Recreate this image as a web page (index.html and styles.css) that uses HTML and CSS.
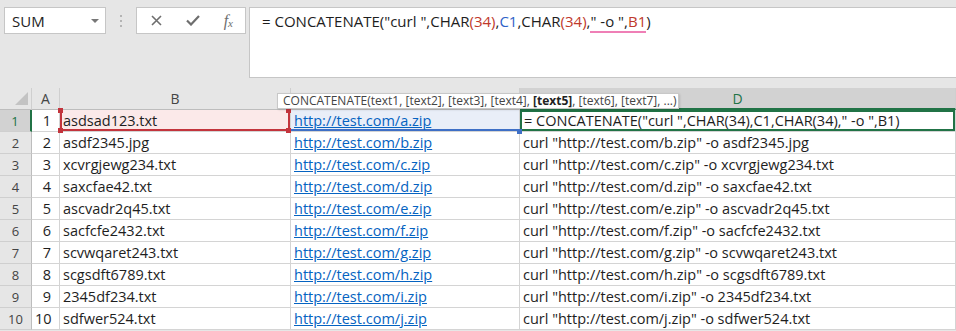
FILE: index.html
```html
<!DOCTYPE html>
<html lang="en">
<head>
  <meta charset="UTF-8" />
  <title>Book1 - Excel</title>
  <link rel="stylesheet" href="styles.css">
</head>
<body>
  <!-- Formula bar -->
  <div class="formula-bar">
    <div class="name-box">
      <span>SUM</span>
      <span class="caret"></span>
    </div>
    <div class="grip"><i></i><i></i><i></i></div>
    <div class="fx-box">
      <svg width="11" height="11" viewBox="0 0 11 11"><path d="M1 1L10 10M10 1L1 10" stroke="#6e6e6e" stroke-width="1.6" fill="none"/></svg>
      <svg width="14" height="11" viewBox="0 0 14 11"><path d="M1 5.5L5 9.5L13 1" stroke="#6e6e6e" stroke-width="2.2" fill="none"/></svg>
      <span class="fx"><i>f</i><sub>x</sub></span>
    </div>
    <div class="formula-input"><span>= CONCATENATE("curl ",CHAR<span class="p">(34)</span>,<span class="ref-c">C1</span>,CHAR<span class="p">(34)</span>,<span class="under">" -o ",<span class="ref-b">B1</span></span>)</span></div>
  </div>

  <!-- Grid -->
  <div class="sheet">
    <div class="tip">CONCATENATE(text1, [text2], [text3], [text4], <b>[text5]</b>, [text6], [text7], ...)</div>

    <div class="hd corner"><span class="tri"></span></div>
    <div class="hd">A</div>
    <div class="hd">B</div>
    <div class="hd"></div>
    <div class="hd active-col">D</div>

    <div class="rh active-row">1</div>
    <div class="c num">1</div>
    <div class="c sel-b">asdsad123.txt</div>
    <div class="c sel-c"><a>http://test.com/a.zip</a></div>
    <div class="c sel-d">= CONCATENATE("curl ",CHAR(34),C1,CHAR(34)," -o ",B1)</div>

    <div class="rh">2</div>
    <div class="c num">2</div>
    <div class="c">asdf2345.jpg</div>
    <div class="c"><a>http://test.com/b.zip</a></div>
    <div class="c">curl "http://test.com/b.zip" -o asdf2345.jpg</div>

    <div class="rh">3</div>
    <div class="c num">3</div>
    <div class="c">xcvrgjewg234.txt</div>
    <div class="c"><a>http://test.com/c.zip</a></div>
    <div class="c">curl "http://test.com/c.zip" -o xcvrgjewg234.txt</div>

    <div class="rh">4</div>
    <div class="c num">4</div>
    <div class="c">saxcfae42.txt</div>
    <div class="c"><a>http://test.com/d.zip</a></div>
    <div class="c">curl "http://test.com/d.zip" -o saxcfae42.txt</div>

    <div class="rh">5</div>
    <div class="c num">5</div>
    <div class="c">ascvadr2q45.txt</div>
    <div class="c"><a>http://test.com/e.zip</a></div>
    <div class="c">curl "http://test.com/e.zip" -o ascvadr2q45.txt</div>

    <div class="rh">6</div>
    <div class="c num">6</div>
    <div class="c">sacfcfe2432.txt</div>
    <div class="c"><a>http://test.com/f.zip</a></div>
    <div class="c">curl "http://test.com/f.zip" -o sacfcfe2432.txt</div>

    <div class="rh">7</div>
    <div class="c num">7</div>
    <div class="c">scvwqaret243.txt</div>
    <div class="c"><a>http://test.com/g.zip</a></div>
    <div class="c">curl "http://test.com/g.zip" -o scvwqaret243.txt</div>

    <div class="rh">8</div>
    <div class="c num">8</div>
    <div class="c">scgsdft6789.txt</div>
    <div class="c"><a>http://test.com/h.zip</a></div>
    <div class="c">curl "http://test.com/h.zip" -o scgsdft6789.txt</div>

    <div class="rh">9</div>
    <div class="c num">9</div>
    <div class="c">2345df234.txt</div>
    <div class="c"><a>http://test.com/i.zip</a></div>
    <div class="c">curl "http://test.com/i.zip" -o 2345df234.txt</div>

    <div class="rh">10</div>
    <div class="c num">10</div>
    <div class="c">sdfwer524.txt</div>
    <div class="c"><a>http://test.com/j.zip</a></div>
    <div class="c">curl "http://test.com/j.zip" -o sdfwer524.txt</div>
  </div>
</body>
</html>
```

FILE: styles.css
```css
:root {
  --chrome: #e6e6e6;
  --line: #d4d4d4;
  --green: #217346;
  --red: #c3343c;
  --blue: #3e6fc6;
  --text: #1e1e1e;
}

* {
  box-sizing: border-box;
}

body {
  margin: 0;
  background: var(--chrome);
  font-family: 'Open Sans', 'Noto Sans', sans-serif;
  font-size: 14.5px;
  color: var(--text);
  overflow: hidden;
}

/* Formula bar */
.formula-bar {
  display: flex;
  align-items: flex-start;
  height: 88px;
  padding: 7px 0 0 4px;
}

.name-box {
  width: 102px;
  height: 27px;
  background: #fff;
  border: 1px solid #c6c6c6;
  display: flex;
  align-items: center;
  justify-content: space-between;
  padding: 0 6px 0 7px;
  font-size: 15px;
}

.caret {
  width: 0;
  height: 0;
  border-left: 4px solid transparent;
  border-right: 4px solid transparent;
  border-top: 4px solid #777;
}

.grip {
  width: 30px;
  height: 27px;
  display: flex;
  flex-direction: column;
  align-items: center;
  justify-content: center;
  gap: 3px;
}

.grip i {
  width: 2px;
  height: 2px;
  background: #b4b4b4;
}

.fx-box {
  width: 110px;
  height: 27px;
  background: #fff;
  border: 1px solid #c6c6c6;
  display: flex;
  align-items: center;
  justify-content: space-between;
  padding: 0 12px 0 14px;
}

.fx {
  font-family: 'Liberation Serif', serif;
  font-size: 16px;
  color: #6e6e6e;
  line-height: 1;
}

.fx sub {
  font-size: 11px;
  font-style: italic;
  vertical-align: -1px;
}

.formula-input {
  flex: 1;
  height: 71px;
  margin-left: 3px;
  background: #fff;
  border: 1px solid #c6c6c6;
  border-right: none;
  padding: 1px 0 0 12px;
  font-size: 15px;
  white-space: pre;
  line-height: 24px;
}

.formula-input .p,
.formula-input .ref-b {
  color: #c0392b;
}

.formula-input .ref-c {
  color: #2f62c8;
}

.formula-input .under {
  border-bottom: 2px solid #ef7fb6;
}

/* Sheet grid */
.sheet {
  position: relative;
  display: grid;
  grid-template-columns: 32px 28px 231px 229px 436px;
  grid-auto-rows: 22px;
  background: #fff;
}

.hd {
  background: var(--chrome);
  border-right: 1px solid #cfcfcf;
  border-bottom: 1px solid #bdbdbd;
  display: flex;
  align-items: center;
  justify-content: center;
  color: #444;
  font-size: 14px;
}

.corner {
  justify-content: flex-end;
  padding-right: 3px;
}

.tri {
  width: 0;
  height: 0;
  border-left: 13px solid transparent;
  border-bottom: 13px solid #c3c3c3;
}

.active-col {
  background: #d2d2d2;
  color: var(--green);
  border-bottom: 2px solid var(--green);
}

.rh {
  background: var(--chrome);
  border-right: 1px solid #bdbdbd;
  border-bottom: 1px solid #cfcfcf;
  display: flex;
  align-items: center;
  justify-content: center;
  font-size: 13px;
  color: #444;
}

.active-row {
  background: #d2d2d2;
  color: var(--green);
  border-right: 2px solid var(--green);
}

.c {
  border-right: 1px solid var(--line);
  border-bottom: 1px solid var(--line);
  padding: 0 3px;
  line-height: 21px;
  white-space: pre;
  overflow: hidden;
}

.c.num {
  text-align: right;
  padding-right: 8px;
}

.c a {
  color: #0563c1;
  text-decoration: underline;
}

/* Referenced / active cells */
.sel-b,
.sel-c {
  position: relative;
  overflow: visible;
}

.sel-b {
  background: #fbe9e9;
  box-shadow: inset 2px 0 0 var(--red), inset -2px 0 0 var(--red), inset 0 -2px 0 var(--red);
}

.sel-b::after {
  content: '';
  position: absolute;
  left: -2px;
  top: -2px;
  width: 5px;
  height: 5px;
  background: var(--red);
  box-shadow: 228px 0 0 var(--red), 0 20px 0 var(--red), 228px 20px 0 var(--red);
  z-index: 2;
}

.sel-c {
  background: #e9eef8;
  box-shadow: inset 0 -2px 0 var(--blue);
}

.sel-c::after {
  content: '';
  position: absolute;
  right: -3px;
  bottom: -3px;
  width: 5px;
  height: 5px;
  background: var(--blue);
  z-index: 2;
}

.sel-d {
  box-shadow: inset 0 0 0 2px var(--green);
  padding-left: 4px;
}

/* Function tooltip */
.tip {
  position: absolute;
  left: 277px;
  top: 5px;
  width: 402px;
  height: 16px;
  background: #fff;
  border: 1px solid #c8c8c8;
  box-shadow: 1px 1px 2px rgba(0,0,0,0.12);
  font-size: 12px;
  line-height: 14px;
  color: #444;
  padding-left: 5px;
  white-space: nowrap;
  z-index: 3;
}

.tip b {
  color: #222;
}
```
